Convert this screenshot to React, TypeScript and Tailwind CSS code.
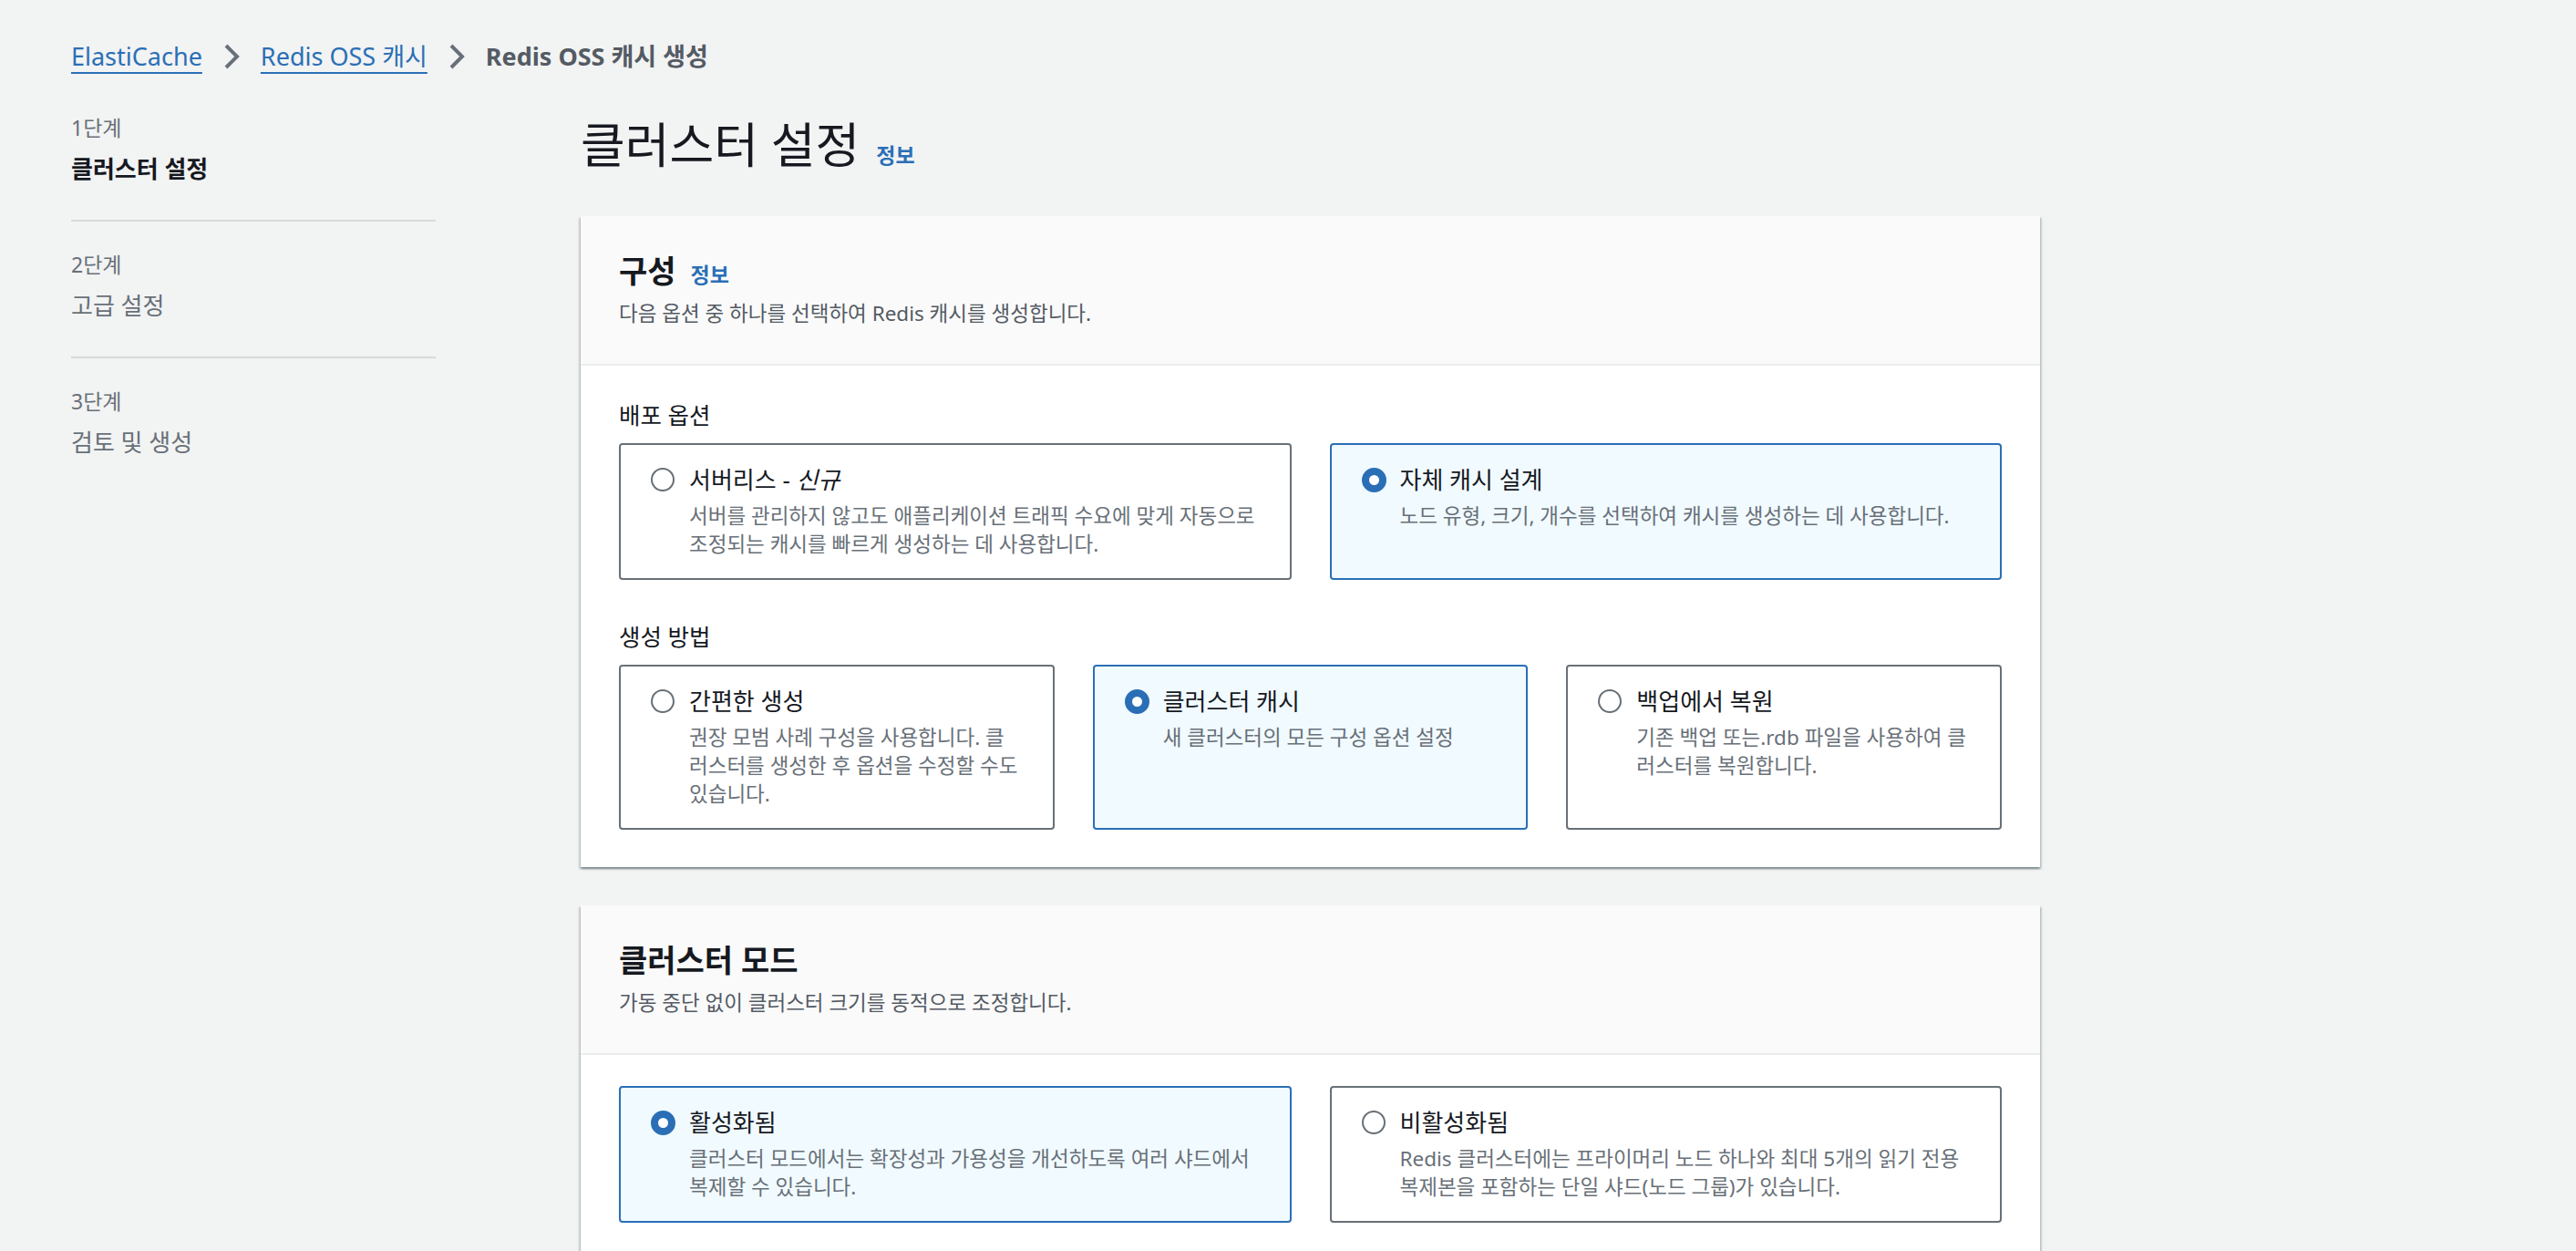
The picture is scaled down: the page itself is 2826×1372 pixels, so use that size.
import { ReactNode } from "react";

interface TileOption {
  title: ReactNode;
  lines: string[];
  selected?: boolean;
}

function Chevron() {
  return (
    <svg width="18" height="30" viewBox="0 0 18 30" className="shrink-0" aria-hidden="true">
      <path d="M3 3 L15 15 L3 27" fill="none" stroke="#687078" strokeWidth="4" />
    </svg>
  );
}

function Radio({ checked }: { checked?: boolean }) {
  if (checked) {
    return <span className="block h-[27px] w-[27px] rounded-full border-[8.5px] border-[#2a6fb6] bg-white" />;
  }
  return <span className="block h-[26px] w-[26px] rounded-full border-2 border-[#687078] bg-white" />;
}

function Tile({ option }: { option: TileOption }) {
  return (
    <div
      className={
        option.selected
          ? "flex rounded-[4px] border-2 border-[#2a6fb6] bg-[#f1faff] pl-[33px] pr-[20px] pt-[20px] pb-[22px]"
          : "flex rounded-[4px] border-2 border-[#687078] bg-white pl-[33px] pr-[20px] pt-[20px] pb-[22px]"
      }
    >
      <div className="flex h-[36px] w-[27px] shrink-0 items-center">
        <Radio checked={option.selected} />
      </div>
      <div className="ml-[15px]">
        <div className="text-[26px] leading-[36px] text-[#16191f]">{option.title}</div>
        <div className="mt-[6px] text-[22.5px] leading-[31px] text-[#687078]">
          {option.lines.map((l) => (
            <div key={l} className="whitespace-nowrap">
              {l}
            </div>
          ))}
        </div>
      </div>
    </div>
  );
}

function InfoLink({ className }: { className?: string }) {
  return (
    <a className={"text-[23px] font-bold text-[#2a6fb6] " + (className ?? "")} href="#">
      정보
    </a>
  );
}

function Card({
  heading,
  info,
  description,
  children,
}: {
  heading: string;
  info?: boolean;
  description: string;
  children: ReactNode;
}) {
  return (
    <section className="bg-white shadow-[0_2px_2px_0_rgba(0,28,36,0.3),2px_2px_2px_0_rgba(0,28,36,0.15),-2px_2px_2px_0_rgba(0,28,36,0.15)]">
      <header className="border-b-2 border-[#eaeded] bg-[#fafafa] px-[42px] pt-[40px] pb-[40px]">
        <div className="flex h-[40px] items-baseline">
          <h2 className="text-[34px] font-bold leading-[40px] text-[#16191f]">{heading}</h2>
          {info && <InfoLink className="ml-[16px]" />}
        </div>
        <p className="mt-[12px] text-[22.5px] leading-[30px] text-[#545b64]">{description}</p>
      </header>
      {children}
    </section>
  );
}

const deployOptions: TileOption[] = [
  {
    title: (
      <>
        서버리스 - <i>신규</i>
      </>
    ),
    lines: ["서버를 관리하지 않고도 애플리케이션 트래픽 수요에 맞게 자동으로", "조정되는 캐시를 빠르게 생성하는 데 사용합니다."],
  },
  {
    title: "자체 캐시 설계",
    lines: ["노드 유형, 크기, 개수를 선택하여 캐시를 생성하는 데 사용합니다."],
    selected: true,
  },
];

const createMethods: TileOption[] = [
  {
    title: "간편한 생성",
    lines: ["권장 모범 사례 구성을 사용합니다. 클", "러스터를 생성한 후 옵션을 수정할 수도", "있습니다."],
  },
  {
    title: "클러스터 캐시",
    lines: ["새 클러스터의 모든 구성 옵션 설정"],
    selected: true,
  },
  {
    title: "백업에서 복원",
    lines: ["기존 백업 또는.rdb 파일을 사용하여 클", "러스터를 복원합니다."],
  },
];

const clusterModes: TileOption[] = [
  {
    title: "활성화됨",
    lines: ["클러스터 모드에서는 확장성과 가용성을 개선하도록 여러 샤드에서", "복제할 수 있습니다."],
    selected: true,
  },
  {
    title: "비활성화됨",
    lines: ["Redis 클러스터에는 프라이머리 노드 하나와 최대 5개의 읽기 전용", "복제본을 포함하는 단일 샤드(노드 그룹)가 있습니다."],
  },
];

const steps = [
  { label: "1단계", title: "클러스터 설정", active: true },
  { label: "2단계", title: "고급 설정" },
  { label: "3단계", title: "검토 및 생성" },
];

export default function App() {
  return (
    <div className="h-[1372px] overflow-hidden bg-[#f2f3f3] font-['Noto_Sans','Noto_Sans_CJK_KR',sans-serif] text-[#16191f]">
      {/* Breadcrumbs */}
      <nav className="flex items-center gap-[23px] pl-[78px] pt-[42px] text-[27px] leading-[40px]">
        <a href="#" className="text-[#2a6fb6] underline decoration-2 underline-offset-[7px]">
          ElastiCache
        </a>
        <Chevron />
        <a href="#" className="text-[#2a6fb6] underline decoration-2 underline-offset-[7px]">
          Redis OSS 캐시
        </a>
        <Chevron />
        <span className="font-bold text-[#545b64]">Redis OSS 캐시 생성</span>
      </nav>

      <div className="flex pl-[78px] pt-[44px]">
        {/* Wizard steps */}
        <aside className="w-[400px] shrink-0">
          {steps.map((s, i) => (
            <div key={s.label}>
              <div className={i === 0 ? "" : "mt-[33px]"}>
                <div className="text-[23px] leading-[28px] text-[#687078]">{s.label}</div>
                <div
                  className={
                    s.active
                      ? "mt-[15px] text-[26px] font-bold leading-[32px] text-[#16191f]"
                      : "mt-[15px] text-[26px] leading-[32px] text-[#687078]"
                  }
                >
                  {s.title}
                </div>
              </div>
              {i < steps.length - 1 && <div className="mt-[40px] h-[2px] bg-[#d5dbdb]" />}
            </div>
          ))}
        </aside>

        {/* Main */}
        <main className="ml-[159px] w-[1601px] shrink-0">
          <div className="flex items-baseline pt-[3px]">
            <h1 className="text-[53px] leading-[60px] text-[#16191f]">클러스터 설정</h1>
            <InfoLink className="ml-[18px]" />
          </div>

          <div className="mt-[48px]">
            <Card heading="구성" info description="다음 옵션 중 하나를 선택하여 Redis 캐시를 생성합니다.">
              <div className="px-[42px] pt-[38px] pb-[41px]">
                <div className="text-[25.5px] leading-[32px]">배포 옵션</div>
                <div className="mt-[15px] grid grid-cols-2 gap-[42px]">
                  {deployOptions.map((o, i) => (
                    <Tile key={i} option={o} />
                  ))}
                </div>
                <div className="mt-[46px] text-[25.5px] leading-[32px]">생성 방법</div>
                <div className="mt-[15px] grid grid-cols-3 gap-[42px]">
                  {createMethods.map((o, i) => (
                    <Tile key={i} option={o} />
                  ))}
                </div>
              </div>
            </Card>
          </div>

          <div className="mt-[42px]">
            <Card heading="클러스터 모드" description="가동 중단 없이 클러스터 크기를 동적으로 조정합니다.">
              <div className="px-[42px] pt-[34px] pb-[41px]">
                <div className="grid grid-cols-2 gap-[42px]">
                  {clusterModes.map((o, i) => (
                    <Tile key={i} option={o} />
                  ))}
                </div>
              </div>
            </Card>
          </div>
        </main>
      </div>
    </div>
  );
}
